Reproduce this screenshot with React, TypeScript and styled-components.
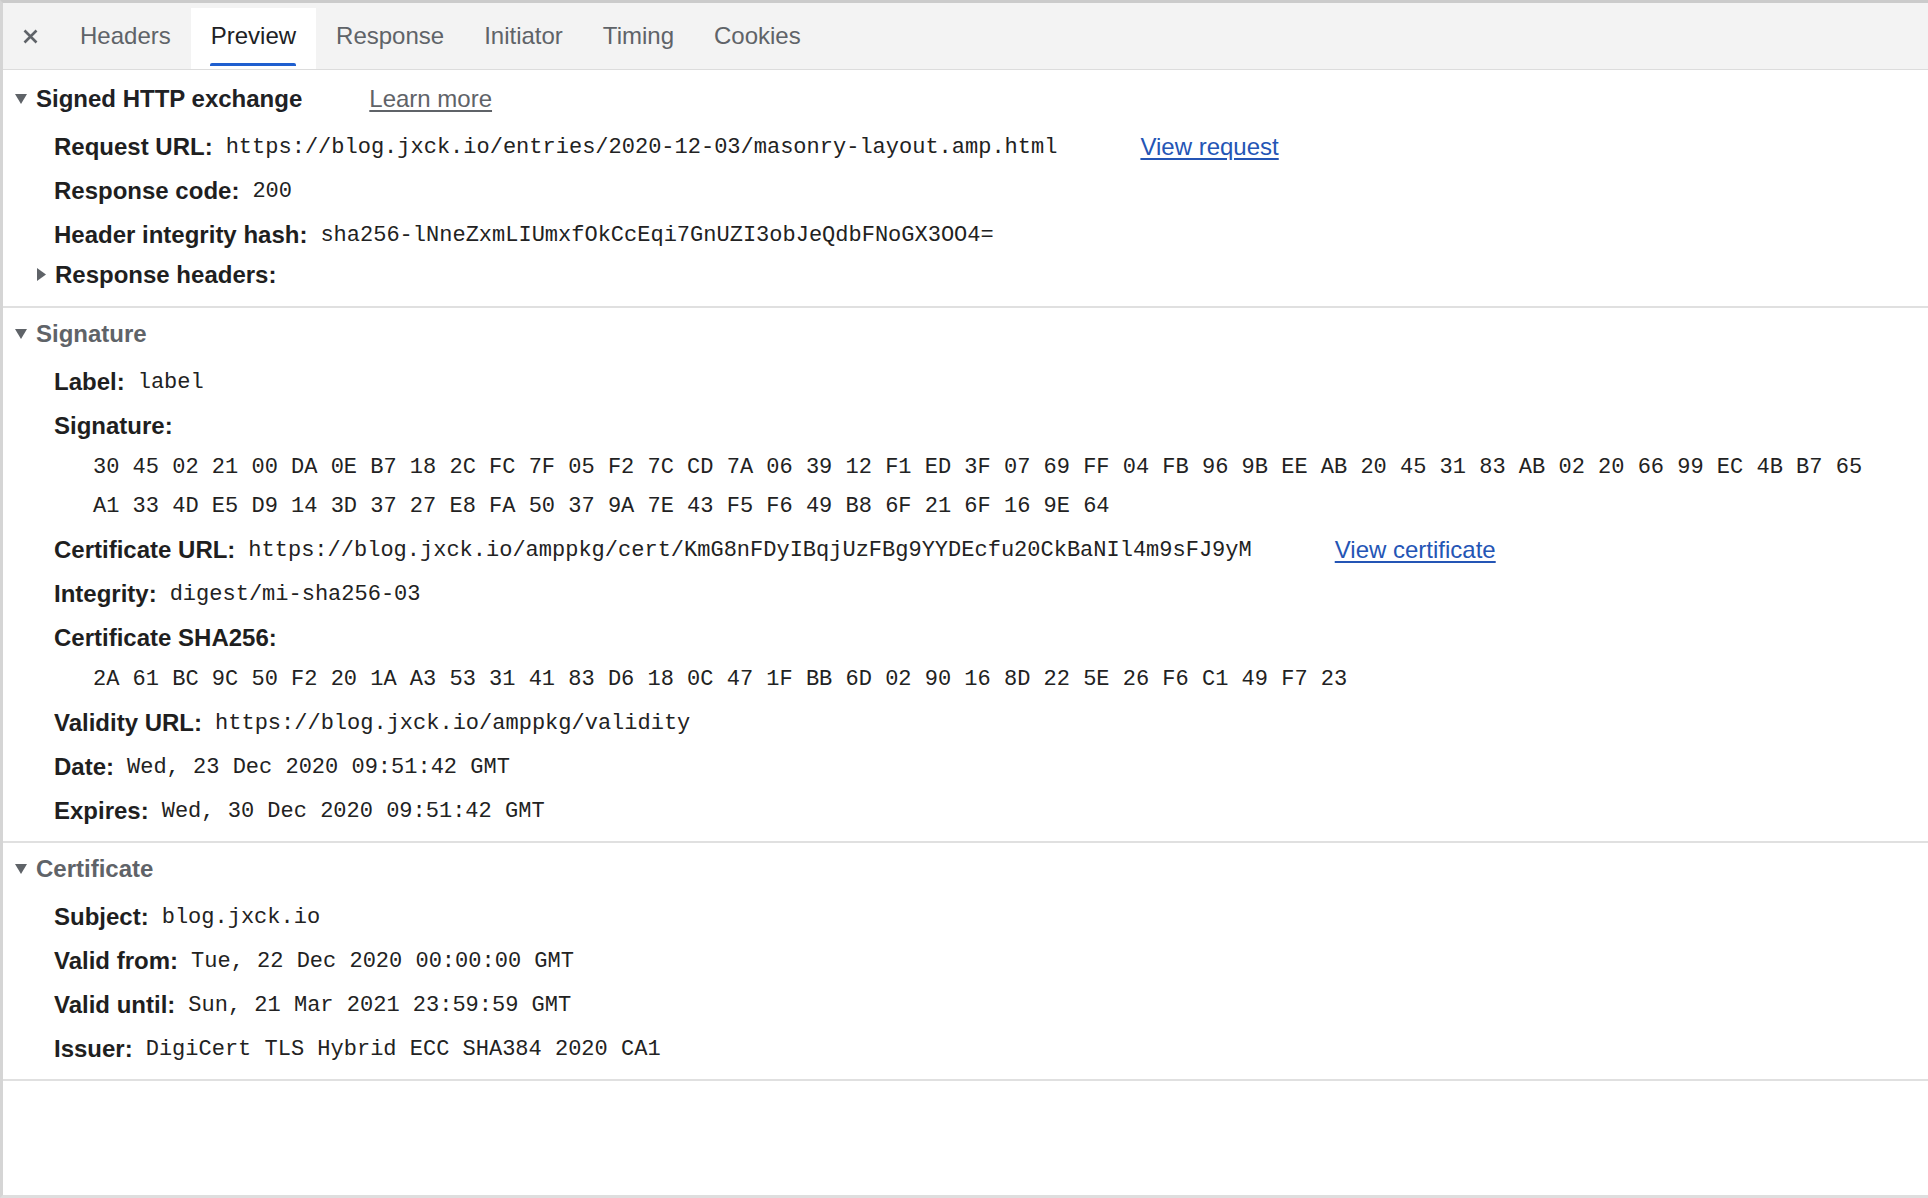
import React from "react";
import styled, { createGlobalStyle } from "styled-components";

const GlobalStyle = createGlobalStyle`
  html, body {
    margin: 0;
    padding: 0;
    background: #ffffff;
  }
  body {
    font-family: "Liberation Sans", Arial, sans-serif;
  }
`;

const Panel = styled.div`
  box-sizing: border-box;
  height: 1198px;
  border-top: 3px solid #cbcbcb;
  border-left: 3px solid #d5d5d5;
  border-bottom: 3px solid #dedede;
  display: flex;
  flex-direction: column;
  overflow: hidden;
  background: #ffffff;
`;

const TabBar = styled.nav`
  height: 61px;
  padding-top: 5px;
  background: #f3f3f3;
  border-bottom: 1px solid #dcdcdc;
  display: flex;
  align-items: stretch;
`;

const CloseButton = styled.div`
  width: 54px;
  margin-right: 3px;
  padding-bottom: 5px;
  display: flex;
  align-items: center;
  justify-content: center;
`;

const Tab = styled.div<{ $active?: boolean }>`
  position: relative;
  padding: 0 20px 5px;
  display: flex;
  align-items: center;
  font-size: 24px;
  color: ${(p) => (p.$active ? "#202124" : "#5f6368")};
  background: ${(p) => (p.$active ? "#ffffff" : "transparent")};

  &::after {
    content: "";
    display: ${(p) => (p.$active ? "block" : "none")};
    position: absolute;
    left: 19px;
    right: 20px;
    bottom: 3px;
    height: 3px;
    border-radius: 2px 2px 0 0;
    background: #1f5fcf;
  }
`;

const Content = styled.main`
  flex: 1;
`;

const Section = styled.section<{ $first?: boolean }>`
  padding: ${(p) => (p.$first ? "7px" : "4px")} 0 8px;
  border-bottom: 2px solid #e0e0e0;
`;

const SectionHeader = styled.div<{ $muted?: boolean }>`
  height: 44px;
  margin-bottom: 4px;
  padding-left: 12px;
  display: flex;
  align-items: center;
  font-size: 24px;
  font-weight: bold;
  color: ${(p) => (p.$muted ? "#5f6368" : "#202124")};
`;

const Arrow = styled.svg<{ $gap: number }>`
  flex: none;
  margin-right: ${(p) => p.$gap}px;
`;

const LearnMore = styled.a`
  margin-left: 67px;
  font-weight: normal;
  color: #5f6368;
  text-decoration: underline;
  text-underline-offset: 3px;
`;

const Row = styled.div<{ $expandable?: boolean }>`
  height: ${(p) => (p.$expandable ? "41px" : "44px")};
  margin: ${(p) => (p.$expandable ? "-3px 0 3px" : "0")};
  padding-left: ${(p) => (p.$expandable ? "34px" : "51px")};
  display: flex;
  align-items: center;
  white-space: nowrap;
`;

const Label = styled.span`
  font-size: 24px;
  font-weight: bold;
  color: #1f1f1f;
`;

const Value = styled.span`
  margin-left: 13px;
  font-family: "Liberation Mono", "Courier New", monospace;
  font-size: 22px;
  color: #222222;
`;

const Link = styled.a`
  margin-left: 83px;
  font-size: 24px;
  color: #2455b5;
  text-decoration: underline;
  text-underline-offset: 3px;
`;

const HexBlock = styled.div`
  padding: 0 0 2px 90px;
  font-family: "Liberation Mono", "Courier New", monospace;
  font-size: 22px;
  line-height: 39px;
  color: #222222;
  white-space: pre;
`;

type Field =
  | { kind: "field"; label: string; value: string; link?: string }
  | { kind: "hex"; lines: string[] }
  | { kind: "expandable"; label: string };

interface ISection {
  title: string;
  muted?: boolean;
  learnMore?: boolean;
  fields: Field[];
}

const tabs = ["Headers", "Preview", "Response", "Initiator", "Timing", "Cookies"];

const sections: ISection[] = [
  {
    title: "Signed HTTP exchange",
    learnMore: true,
    fields: [
      {
        kind: "field",
        label: "Request URL:",
        value: "https://blog.jxck.io/entries/2020-12-03/masonry-layout.amp.html",
        link: "View request",
      },
      { kind: "field", label: "Response code:", value: "200" },
      {
        kind: "field",
        label: "Header integrity hash:",
        value: "sha256-lNneZxmLIUmxfOkCcEqi7GnUZI3obJeQdbFNoGX3OO4=",
      },
      { kind: "expandable", label: "Response headers:" },
    ],
  },
  {
    title: "Signature",
    muted: true,
    fields: [
      { kind: "field", label: "Label:", value: "label" },
      { kind: "field", label: "Signature:", value: "" },
      {
        kind: "hex",
        lines: [
          "30 45 02 21 00 DA 0E B7 18 2C FC 7F 05 F2 7C CD 7A 06 39 12 F1 ED 3F 07 69 FF 04 FB 96 9B EE AB 20 45 31 83 AB 02 20 66 99 EC 4B B7 65",
          "A1 33 4D E5 D9 14 3D 37 27 E8 FA 50 37 9A 7E 43 F5 F6 49 B8 6F 21 6F 16 9E 64",
        ],
      },
      {
        kind: "field",
        label: "Certificate URL:",
        value: "https://blog.jxck.io/amppkg/cert/KmG8nFDyIBqjUzFBg9YYDEcfu20CkBaNIl4m9sFJ9yM",
        link: "View certificate",
      },
      { kind: "field", label: "Integrity:", value: "digest/mi-sha256-03" },
      { kind: "field", label: "Certificate SHA256:", value: "" },
      {
        kind: "hex",
        lines: [
          "2A 61 BC 9C 50 F2 20 1A A3 53 31 41 83 D6 18 0C 47 1F BB 6D 02 90 16 8D 22 5E 26 F6 C1 49 F7 23",
        ],
      },
      { kind: "field", label: "Validity URL:", value: "https://blog.jxck.io/amppkg/validity" },
      { kind: "field", label: "Date:", value: "Wed, 23 Dec 2020 09:51:42 GMT" },
      { kind: "field", label: "Expires:", value: "Wed, 30 Dec 2020 09:51:42 GMT" },
    ],
  },
  {
    title: "Certificate",
    muted: true,
    fields: [
      { kind: "field", label: "Subject:", value: "blog.jxck.io" },
      { kind: "field", label: "Valid from:", value: "Tue, 22 Dec 2020 00:00:00 GMT" },
      { kind: "field", label: "Valid until:", value: "Sun, 21 Mar 2021 23:59:59 GMT" },
      { kind: "field", label: "Issuer:", value: "DigiCert TLS Hybrid ECC SHA384 2020 CA1" },
    ],
  },
];

const DownArrow = () => (
  <Arrow $gap={9} width="12" height="10" viewBox="0 0 12 10">
    <path d="M0 0 L12 0 L6 10 Z" fill="#5f6368" />
  </Arrow>
);

const RightArrow = () => (
  <Arrow $gap={9} width="9" height="13" viewBox="0 0 9 13">
    <path d="M0 0 L9 6.5 L0 13 Z" fill="#5f6368" />
  </Arrow>
);

const renderField = (field: Field, index: number) => {
  if (field.kind === "hex") {
    return <HexBlock key={index}>{field.lines.join("\n")}</HexBlock>;
  }
  if (field.kind === "expandable") {
    return (
      <Row $expandable key={index}>
        <RightArrow />
        <Label>{field.label}</Label>
      </Row>
    );
  }
  return (
    <Row key={index}>
      <Label>{field.label}</Label>
      {field.value && <Value>{field.value}</Value>}
      {field.link && <Link>{field.link}</Link>}
    </Row>
  );
};

export default function App() {
  return (
    <>
      <GlobalStyle />
      <Panel>
        <TabBar>
          <CloseButton>
            <svg width="15" height="15" viewBox="0 0 15 15">
              <path d="M1.5 1.5 L13.5 13.5 M13.5 1.5 L1.5 13.5" stroke="#5f6368" strokeWidth="2.6" />
            </svg>
          </CloseButton>
          {tabs.map((tab) => (
            <Tab key={tab} $active={tab === "Preview"}>
              {tab}
            </Tab>
          ))}
        </TabBar>
        <Content>
          {sections.map((section, i) => (
            <Section key={section.title} $first={i === 0}>
              <SectionHeader $muted={section.muted}>
                <DownArrow />
                {section.title}
                {section.learnMore && <LearnMore>Learn more</LearnMore>}
              </SectionHeader>
              {section.fields.map(renderField)}
            </Section>
          ))}
        </Content>
      </Panel>
    </>
  );
}
